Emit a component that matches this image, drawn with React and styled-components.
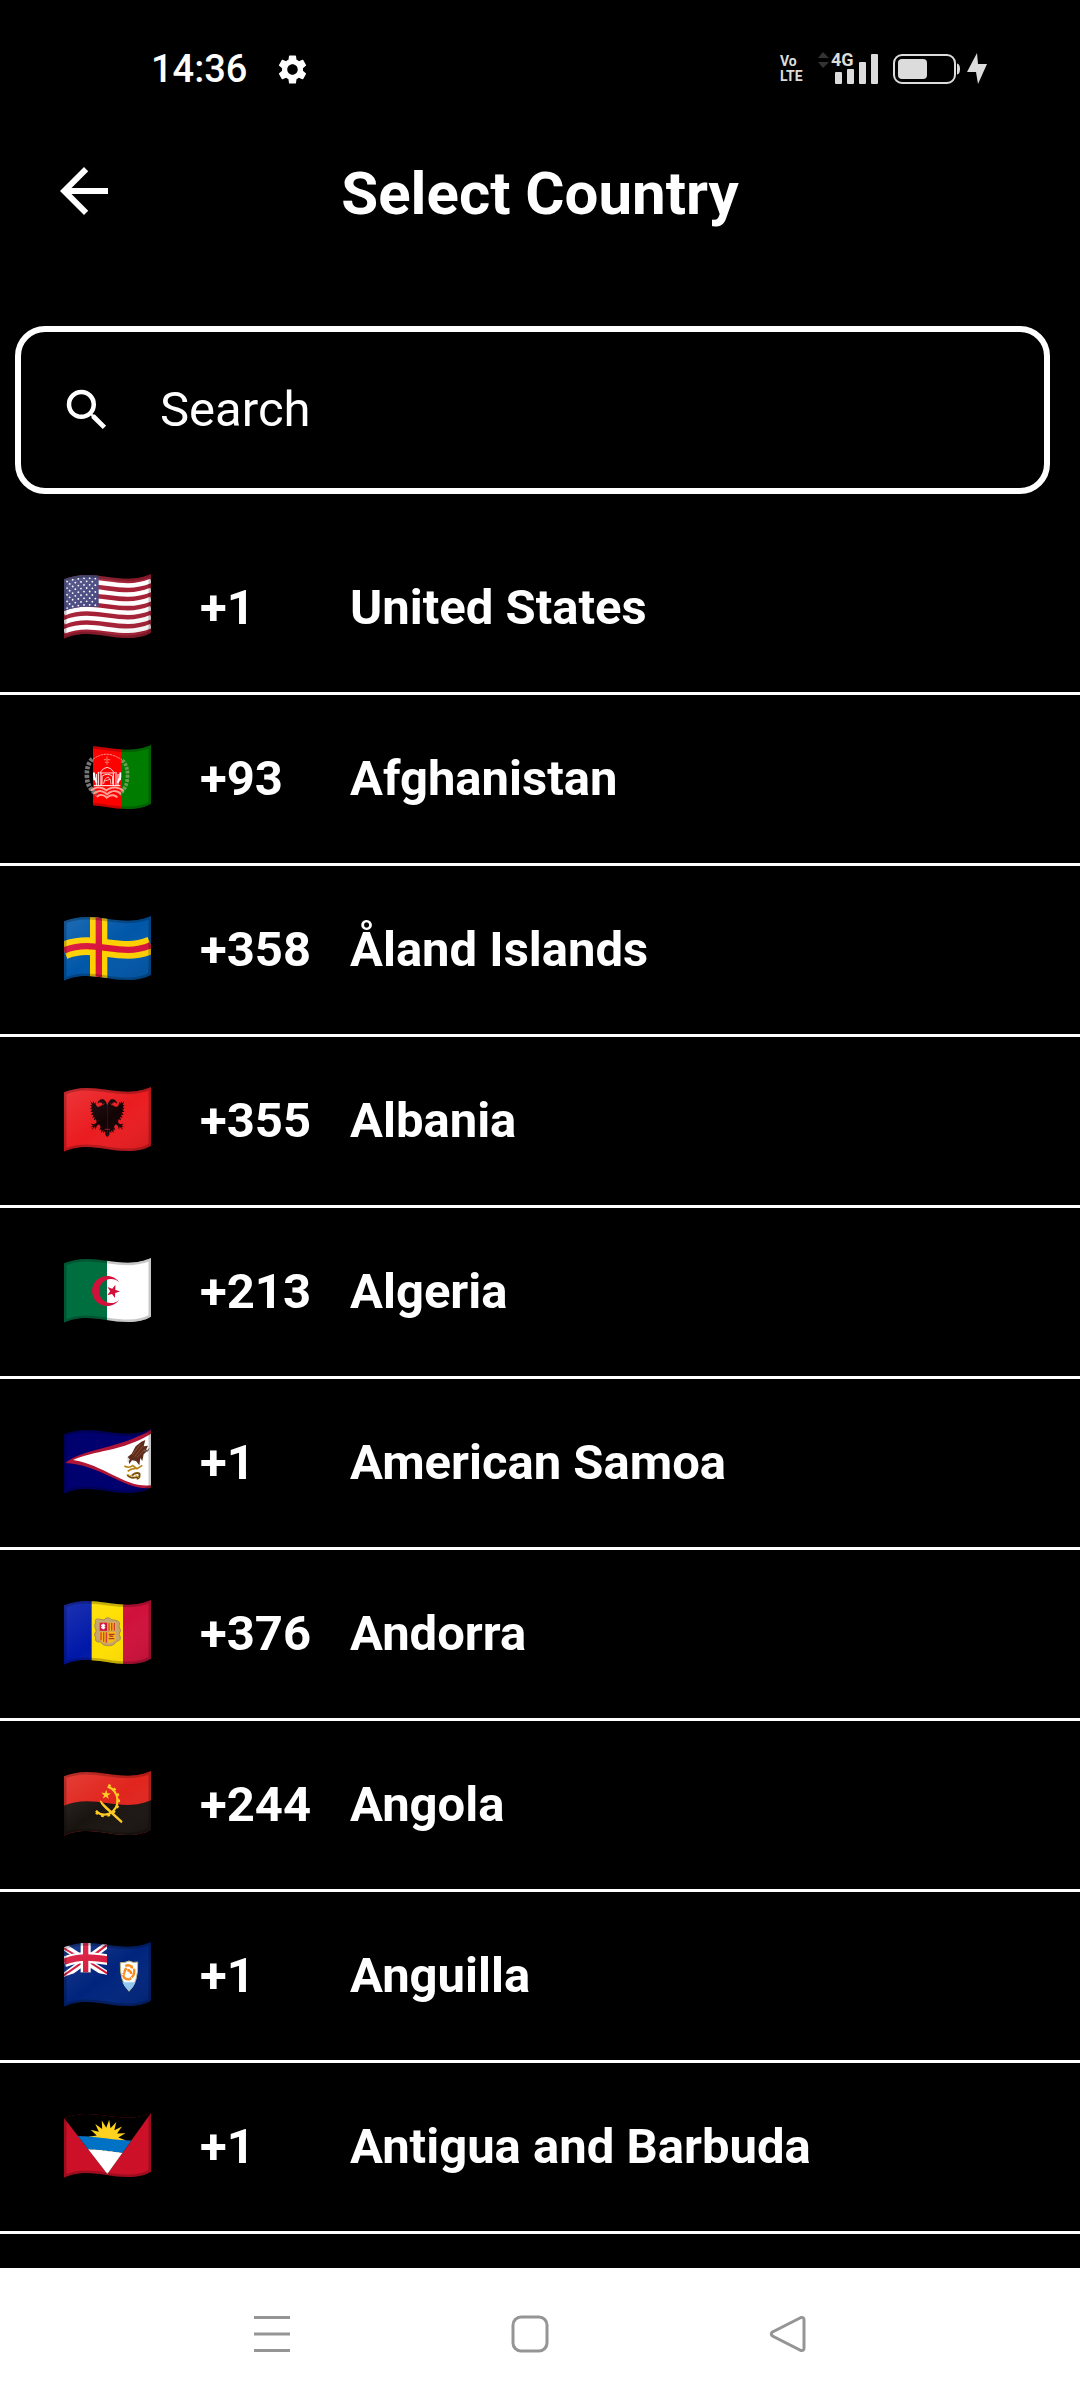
import React, { useId, useState } from "react";
import styled, { createGlobalStyle } from "styled-components";
import { MdArrowBack, MdSearch, MdSettings } from "react-icons/md";

const GlobalStyle = createGlobalStyle`
  * { box-sizing: border-box; }
  body { margin: 0; background: #000; color: #fff; font-family: Roboto, "Liberation Sans", sans-serif; }
  button { font: inherit; color: inherit; background: none; border: 0; padding: 0; cursor: pointer; }
`;

const Page = styled.div`
  min-height: 100vh;
  display: flex;
  flex-direction: column;
`;

const StatusBar = styled.div`
  display: flex;
  align-items: center;
  justify-content: space-between;
  height: 138px;
  padding: 0 92px 0 151px;
`;

const StatusGroup = styled.div`
  display: flex;
  align-items: center;
  gap: ${(p) => p.$gap}px;
  color: ${(p) => p.$color};
`;

const Clock = styled.time`
  font-size: 38px;
  line-height: 44px;
  font-weight: 500;
`;

const Volte = styled.span`
  width: 32px;
  font-size: 14px;
  line-height: 15px;
  font-weight: 700;
`;

const Signal = styled.div`
  display: flex;
  margin-right: 8px;
`;

const Header = styled.header`
  display: grid;
  grid-template-columns: 1fr auto 1fr;
  align-items: center;
  height: 106px;
  padding: 0 48px;
`;

const BackButton = styled.button`
  display: flex;
  justify-self: start;
`;

const Title = styled.h1`
  margin: 0;
  padding-top: 5px;
  font-size: 60px;
  line-height: 70px;
  font-weight: 700;
`;

const SearchBox = styled.label`
  display: flex;
  align-items: center;
  gap: 46px;
  height: 168px;
  margin: 82px 30px 30px 15px;
  padding: 0 39px;
  border: 6px solid #fff;
  border-radius: 30px;
`;

const SearchInput = styled.input`
  flex: 1;
  min-width: 0;
  padding: 0;
  border: 0;
  outline: 0;
  background: none;
  color: #fff;
  font: 400 49px/56px Roboto, "Liberation Sans", sans-serif;
  &::placeholder { color: #fff; opacity: 1; }
`;

const CountryList = styled.ul`
  margin: 0;
  padding: 0;
  list-style: none;
`;

const CountryItem = styled.li`
  border-bottom: 3px solid #fff;
`;

const CountryButton = styled.button`
  display: grid;
  grid-template-columns: 136px 150px 1fr;
  align-items: center;
  width: 100%;
  height: 168px;
  padding: 0 64px;
  text-align: left;
  font-size: 49px;
  line-height: 56px;
  font-weight: 700;
`;

const FlagSvg = styled.svg`
  display: block;
  width: 87px;
  height: 65px;
  margin-bottom: 3px;
`;

const NavBar = styled.nav`
  display: flex;
  align-items: center;
  justify-content: center;
  gap: 218px;
  height: 132px;
  margin-top: auto;
  padding-right: 20px;
  background: #fff;
  color: #959595;
`;

const NavButton = styled.button`
  display: flex;
`;

/* ---------- flags: drawn on a 261 x 195 cloth with a waving outline ---------- */

const CREST = "C20 8 42 3 68 3 C110 3 145 14 192 14 C220 14 242 8 261 0";
const OUTLINE = `M0 16 ${CREST} V176 C242 187 220 192 192 192 C145 192 110 180 68 180 C40 180 20 185 0 194Z`;
const CURVE = [[0, 16], [30, 7], [68, 3], [100, 5], [130, 9], [160, 12], [192, 14], [230, 10], [261, 0]];

function rise(x) {
  for (let i = 1; i < CURVE.length; i++) {
    const [x0, y0] = CURVE[i - 1];
    const [x1, y1] = CURVE[i];
    if (x <= x1) return y0 + ((y1 - y0) * (x - x0)) / (x1 - x0);
  }
  return 0;
}

function Band({ y, h, fill }) {
  return <path d={`M0 16 ${CREST}`} fill="none" stroke={fill} strokeWidth={h} transform={`translate(0 ${y + h / 2})`} />;
}

function starPoints(cx, cy, r, turn = -90, inner = 0.4) {
  return Array.from({ length: 10 }, (_, i) => {
    const a = ((turn + i * 36) * Math.PI) / 180;
    const k = i % 2 ? r * inner : r;
    return `${cx + k * Math.cos(a)},${cy + k * Math.sin(a)}`;
  }).join(" ");
}

function UnitedStates() {
  const dots = [];
  for (let row = 0; row < 9; row++) {
    const n = row % 2 ? 5 : 6;
    for (let i = 0; i < n; i++) {
      const x = (row % 2 ? 17 : 9) + i * 17;
      dots.push(<circle key={`${row}-${i}`} cx={x} cy={rise(x) + 9 + row * 10} r="2.7" />);
    }
  }
  return (
    <>
      <rect width="261" height="195" fill="#a51f35" />
      {[1, 3, 5, 7, 9, 11].map((n) => <Band key={n} y={n * 13.6} h={13.6} fill="#fff" />)}
      <path d="M0 0H104V99C94 98 82 98 68 98C42 98 20 103 0 111Z" fill="#46467f" />
      <g fill="#fff">{dots}</g>
    </>
  );
}

function Afghanistan() {
  return (
    <>
      <rect width="261" height="195" fill="#000" />
      <rect x="87" width="87" height="195" fill="#f00" />
      <rect x="173" width="88" height="195" fill="#007d00" />
      <g fill="none" stroke="#fff" strokeLinecap="round">
        <path d="M85 42Q66 60 69 98Q70 128 98 148" stroke="#777" strokeWidth="14" strokeDasharray="9 4" strokeLinecap="butt" />
        <path d="M175 46Q194 65 190 100Q188 130 166 148" stroke="#6f9d59" strokeWidth="11" strokeDasharray="8 4" strokeLinecap="butt" />
        <path d="M88 42Q128 12 174 45" stroke="#ff8d82" strokeWidth="3" strokeDasharray="5 4" />
        <path d="M129 36V58M121 44H137M124 52H134" stroke="#ff5b4a" strokeWidth="4" />
        <path d="M97 121V88M103 121V82M111 121V84M148 121V84M156 121V82M162 121V88M91 122H168" strokeWidth="3" />
        <path d="M108 83Q129 50 151 83ZM114 117V94Q130 82 146 94V117" stroke="#ffd9d4" strokeWidth="3" />
        <path d="M119 116Q121 98 133 96Q142 106 141 117M122 108L139 103" strokeWidth="2" />
        <path d="M91 103L90 85M97 111L91 96M168 103L169 85M162 111L169 96" strokeWidth="6" />
        <path d="M83 136Q102 119 127 136Q151 119 177 136M91 145Q109 130 129 148Q150 130 169 145M100 154Q114 144 128 158Q145 144 160 157" stroke="#ff9d93" strokeWidth="6" strokeDasharray="9 2" />
      </g>
    </>
  );
}

function Aland() {
  return (
    <>
      <rect width="261" height="195" fill="#0057a8" />
      <rect x="78" width="52" height="195" fill="#ffd000" />
      <Band y={61} h={53} fill="#ffd000" />
      <rect x="95" width="19" height="195" fill="#d8123b" />
      <Band y={78} h={19} fill="#d8123b" />
    </>
  );
}

const EAGLE_HALF =
  "M0 55L4 44L11 37L20 37L27 43L30 50L23 46L16 47L14 53L21 58L29 60L34 54L36 45L39 50L42 42L44 49L51 43L46 54L52 55L46 60L52 66L45 67L51 75L43 75L49 84L41 83L46 92L38 90L41 100L34 97L32 106L38 112L49 110L43 116L51 121L42 119L47 129L37 119L35 128L32 117L25 112L20 119L24 130L18 127L19 138L12 130L12 139L7 132L6 143L0 151Z";

function Albania() {
  return (
    <>
      <rect width="261" height="195" fill="#ea1c20" />
      <g transform="translate(130 0)" fill="#140305">
        <path d={EAGLE_HALF} />
        <path d={EAGLE_HALF} transform="scale(-1 1)" />
      </g>
      <path d="M120 49L116 55M140 49L144 55M122 127H138" stroke="#ea1c20" strokeWidth="2" />
    </>
  );
}

function Algeria() {
  return (
    <>
      <rect width="130" height="195" fill="#006f40" />
      <rect x="129" width="132" height="195" fill="#fff" />
      <path d="M166 73A45 45 0 1 0 166 125A36 36 0 1 1 166 73Z" fill="#d2103a" />
      <polygon points={starPoints(147, 100, 21, 2)} fill="#d2103a" />
    </>
  );
}

function AmericanSamoa() {
  return (
    <>
      <rect width="261" height="195" fill="#00006f" />
      <path d="M3 102C60 56 165 60 261 2V177C180 185 110 106 3 102Z" fill="#b21637" />
      <path d="M27 93C84 65 180 66 261 14V169C185 178 124 109 27 93Z" fill="#fff" />
      <path d="M191 84L203 74L215 52L232 38L244 33L239 52L252 50L246 62L254 62L239 76L235 96L229 87L226 109L216 96L204 94L196 105Z" fill="#5e2c1d" />
      <path d="M205 78L229 46M212 83L237 51M219 85L243 61" stroke="#8f4c31" strokeWidth="3" />
      <path d="M191 83L190 100L198 92Z" fill="#ddd" />
      <path d="M181 111Q195 119 206 110L219 119L235 109M191 127Q202 117 215 119" fill="none" stroke="#b68518" strokeWidth="5" />
      <path d="M190 138Q200 151 224 143M204 139Q218 129 226 134Q230 146 218 149" fill="none" stroke="#77510c" strokeWidth="6" />
      <path d="M188 136L204 141M211 136L225 145" stroke="#d9ab35" strokeWidth="3" />
      <path d="M239 65L251 67L255 58" fill="none" stroke="#777" strokeWidth="3" />
    </>
  );
}

function Andorra() {
  return (
    <>
      <rect width="84" height="195" fill="#0018a8" />
      <rect x="83" width="95" height="195" fill="#ffdf00" />
      <rect x="177" width="84" height="195" fill="#d0103a" />
      <path d="M95 65Q91 56 104 57L120 60Q129 47 143 59L160 62Q170 66 165 80Q174 91 165 103Q176 121 158 124Q149 139 131 137Q116 137 109 126Q91 127 95 113Q87 101 97 93Q88 78 95 65Z" fill="#c7a568" stroke="#aa8651" strokeWidth="3" />
      <path d="M107 68H155V117Q151 128 131 130Q111 128 107 117Z" fill="#f4ba18" />
      <rect x="107" y="68" width="22" height="25" fill="#d0103a" />
      <path d="M118 71V88M112 75L123 84M123 75L112 84" stroke="#fff" strokeWidth="5" />
      <path d="M135 69V92M143 69V92M151 69V92M111 97V121M119 97V125M127 97V128" stroke="#d23b2f" strokeWidth="4" />
      <path d="M134 103H152M134 116H151M136 108L148 109" stroke="#b83422" strokeWidth="4" />
      <path d="M105 94H157M131 66V130" stroke="#c7a568" strokeWidth="3" />
    </>
  );
}

function Angola() {
  return (
    <>
      <rect width="261" height="195" fill="#e0251d" />
      <path d={`M0 16 ${CREST} V195 H0Z`} transform="translate(0 88)" fill="#1a1411" />
      <path d="M131 47A44 44 0 0 1 136 128Q112 137 96 119" fill="none" stroke="#ffcb22" strokeWidth="7" />
      <path d="M133 42A49 49 0 0 1 138 132Q110 143 92 121" fill="none" stroke="#ffcb22" strokeWidth="6" strokeDasharray="8 11" />
      <path d="M107 90Q110 86 117 96L176 151L172 157L134 122Q113 106 107 90Z" fill="#ffcb22" />
      <polygon points={starPoints(126, 71, 15, -86)} fill="#ffcb22" />
    </>
  );
}

function Anguilla({ clip }) {
  return (
    <>
      <rect width="261" height="195" fill="#00247d" />
      <clipPath id={`${clip}-canton`}><path d="M0 0H129V98C108 94 90 91 68 91C40 91 20 96 0 105Z" /></clipPath>
      <g clipPath={`url(#${clip}-canton)`}>
        <path d="M-2 13L130 98M-2 105L130 8" stroke="#fff" strokeWidth="20" />
        <path d="M-2 18L54 51M76 60L130 94M-2 101L54 62M76 49L130 8" stroke="#cf1437" strokeWidth="6" />
        <rect x="50" width="30" height="110" fill="#fff" />
        <Band y={28} h={32} fill="#fff" />
        <rect x="57" width="16" height="110" fill="#d8173b" />
        <Band y={34} h={19} fill="#d8173b" />
      </g>
      <path d="M169 62Q182 63 195 57Q208 64 221 60Q224 120 195 148Q166 116 169 62Z" fill="#fff" stroke="#b9b77e" strokeWidth="3" />
      <path d="M175 121H215Q208 137 195 146Q181 136 175 121Z" fill="#91c9f5" />
      <path d="M184 72Q194 66 204 75M210 80Q214 96 203 106M197 112Q181 113 177 99M181 92Q182 82 188 79M190 84Q201 86 202 96" fill="none" stroke="#f78c1e" strokeWidth="7" />
      <path d="M205 69L208 80L198 78ZM198 103L204 112L194 116ZM174 94L184 90L183 101Z" fill="#f78c1e" />
    </>
  );
}

function Antigua() {
  const rays = Array.from({ length: 33 }, (_, i) => {
    const a = Math.PI + ((i - 0.5) * Math.PI) / 16;
    const r = i % 2 ? 57 : 33;
    return `${130 + r * Math.cos(a)},${77 + r * Math.sin(a)}`;
  }).join(" ");
  return (
    <>
      <rect width="261" height="195" fill="#cb1027" />
      <clipPath id="antigua-vee"><path d="M0 15L130 183L261 0V-5H0Z" /></clipPath>
      <g clipPath="url(#antigua-vee)">
        <rect y="-5" width="261" height="200" fill="#000" />
        <polygon points={rays} fill="#ffd21f" />
        <path d="M30 69C90 67 140 83 225 83V122C160 122 130 110 60 108Z" fill="#0072c6" />
        <path d="M60 108C130 110 160 122 225 122V195H60Z" fill="#fff" />
      </g>
    </>
  );
}

function Flag({ design: Design, label, plainEdge }) {
  const id = `flag${useId().replace(/[^a-zA-Z0-9]/g, "")}`;
  return (
    <FlagSvg viewBox="0 0 261 195" role="img" aria-label={label}>
      <defs>
        <clipPath id={id}><path d={OUTLINE} /></clipPath>
        <linearGradient id={`${id}-shade`} x1="0" y1="0" x2="1" y2="1">
          <stop offset="0" stopColor="#fff" stopOpacity={plainEdge ? 0 : 0.12} />
          <stop offset="0.5" stopColor="#fff" stopOpacity="0" />
          <stop offset="1" stopColor="#000" stopOpacity={plainEdge ? 0 : 0.1} />
        </linearGradient>
      </defs>
      <g clipPath={`url(#${id})`}>
        <Design clip={id} />
        <path d={OUTLINE} fill={plainEdge ? "none" : `url(#${id}-shade)`} stroke="#000" strokeOpacity="0.22" strokeWidth="15" />
      </g>
    </FlagSvg>
  );
}

const COUNTRIES = [
  { name: "United States", code: "+1", flag: UnitedStates },
  { name: "Afghanistan", code: "+93", flag: Afghanistan, plainEdge: true },
  { name: "Åland Islands", code: "+358", flag: Aland },
  { name: "Albania", code: "+355", flag: Albania },
  { name: "Algeria", code: "+213", flag: Algeria, plainEdge: true },
  { name: "American Samoa", code: "+1", flag: AmericanSamoa, plainEdge: true },
  { name: "Andorra", code: "+376", flag: Andorra },
  { name: "Angola", code: "+244", flag: Angola },
  { name: "Anguilla", code: "+1", flag: Anguilla },
  { name: "Antigua and Barbuda", code: "+1", flag: Antigua, plainEdge: true },
];

function SignalIcon() {
  return (
    <svg width="62" height="42" viewBox="0 -3 62 42" role="img" aria-label="4G signal">
      <path d="M1 7L6 1L12 7ZM1 11L6 17L12 11Z" fill="#333" />
      <text x="14" y="15" fontFamily="Roboto, 'Liberation Sans', sans-serif" fontWeight="700" fontSize="18" fill="currentColor">4G</text>
      <g fill="currentColor">
        <rect x="18" y="21" width="7" height="12" rx="1" />
        <rect x="30" y="18" width="7" height="15" rx="1" />
        <rect x="42" y="11" width="7" height="22" rx="1" />
        <rect x="54" y="3" width="7" height="30" rx="1" />
      </g>
    </svg>
  );
}

function BatteryIcon() {
  return (
    <svg width="96" height="32" viewBox="0 0 96 32" role="img" aria-label="Battery charging">
      <rect x="2" y="2" width="61" height="28" rx="8" fill="none" stroke="currentColor" strokeWidth="2" />
      <rect x="6" y="6" width="29" height="20" rx="4" fill="currentColor" />
      <path d="M65 10.500Q68 11 68 16Q68 21 65 21.500Z" fill="currentColor" />
      <path d="M85 0L75 19H84L86 31L95 11H86Z" fill="currentColor" />
    </svg>
  );
}

export default function App() {
  const [query, setQuery] = useState("");
  const shown = COUNTRIES.filter((c) => c.name.toLowerCase().includes(query.toLowerCase()));
  return (
    <>
      <GlobalStyle />
      <Page>
        <StatusBar>
          <StatusGroup $gap={28} $color="#fff">
            <Clock>14:36</Clock>
            <MdSettings size={35} aria-hidden />
          </StatusGroup>
          <StatusGroup $gap={5} $color="#dcdcdc">
            <Volte>Vo<br />LTE</Volte>
            <Signal><SignalIcon /></Signal>
            <BatteryIcon />
          </StatusGroup>
        </StatusBar>
        <Header>
          <BackButton type="button" aria-label="Back"><MdArrowBack size={72} /></BackButton>
          <Title>Select Country</Title>
        </Header>
        <SearchBox>
          <MdSearch size={54} aria-hidden />
          <SearchInput type="text" aria-label="Search" placeholder="Search" value={query} onChange={(e) => setQuery(e.target.value)} />
        </SearchBox>
        <CountryList>
          {shown.map((c) => (
            <CountryItem key={c.name}>
              <CountryButton type="button">
                <Flag design={c.flag} label={`Flag of ${c.name}`} plainEdge={c.plainEdge} />
                <span>{c.code}</span>
                <span>{c.name}</span>
              </CountryButton>
            </CountryItem>
          ))}
        </CountryList>
        <NavBar aria-label="System navigation">
          <NavButton type="button" aria-label="Recent apps">
            <svg width="40" height="40" viewBox="0 0 40 40" fill="none" stroke="currentColor" strokeWidth="3">
              <path d="M2 3.500H38M2 20H38M2 36.500H38" />
            </svg>
          </NavButton>
          <NavButton type="button" aria-label="Home">
            <svg width="40" height="40" viewBox="0 0 40 40" fill="none" stroke="currentColor" strokeWidth="3">
              <rect x="3" y="3" width="34" height="34" rx="8" />
            </svg>
          </NavButton>
          <NavButton type="button" aria-label="Back to previous screen">
            <svg width="40" height="40" viewBox="0 0 40 40" fill="none" stroke="currentColor" strokeWidth="3">
              <path d="M33 3.500L4.500 18Q2 20 4.500 22L33 36.500Q36 37 36 34V6Q36 3 33 3.500Z" />
            </svg>
          </NavButton>
        </NavBar>
      </Page>
    </>
  );
}
